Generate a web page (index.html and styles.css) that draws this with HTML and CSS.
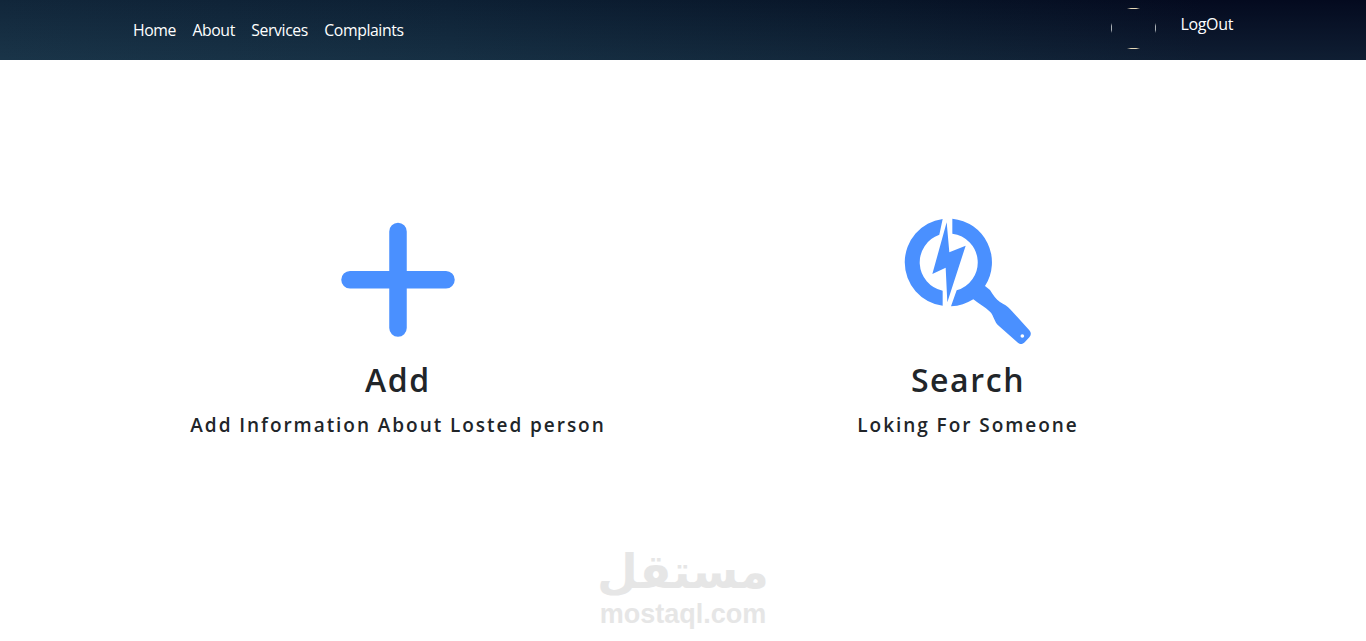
FILE: index.html
```html
<!DOCTYPE html>
<html lang="en">
<head>
<meta charset="utf-8">
<title>Services</title>
<link rel="stylesheet" href="styles.css">
</head>
<body>
<header class="topbar">
  <div class="topbar-inner">
    <nav class="nav">
      <a href="#">Home</a>
      <a href="#">About</a>
      <a href="#">Services</a>
      <a href="#">Complaints</a>
    </nav>
    <div class="account">
      <span class="avatar"><i class="tick t"></i><i class="tick b"></i><i class="tick l"></i><i class="tick r"></i></span>
      <a class="logout" href="#">LogOut</a>
    </div>
  </div>
</header>
<main class="choices">
  <section class="choice">
    <svg class="icon" width="160" height="150" viewBox="0 0 160 150" aria-hidden="true">
      <path d="M80 26.5V123M32 74.7H128" fill="none" stroke="#4a90ff" stroke-width="17.5" stroke-linecap="round"/>
    </svg>
    <h2>Add</h2>
    <p>Add Information About Losted person</p>
  </section>
  <section class="choice">
    <svg class="icon" width="160" height="150" viewBox="-6 0 480 450" aria-hidden="true">
      <g fill="#4a90ff">
        <path d="M158 41.7 A131.5 131.5 0 0 0 158 302.3 L158 257 A87 87 0 0 1 148 89.6 Z"/>
        <path d="M187 41 A131.5 131.5 0 0 1 285 243 L300 255 C310 270 318 284 330 291 C342 298 352 303 362 314 L418 376 C424 383 424 390 418 397 L404 412 C397 419 389 419 382 412 L326 362 C312 350 312 332 300 320 C285 306 265 296 250 283 C230 296 208 303 183 304 L200 256 A87 87 0 0 0 187 86 Z"/>
        <path d="M170 52 L127 207 L167 188 L172 292 L227 122 L178 142 Z"/>
      </g>
      <circle cx="397" cy="393" r="5.5" fill="#fff"/>
    </svg>
    <h2>Search</h2>
    <p>Loking For Someone</p>
  </section>
</main>
<div class="watermark" aria-hidden="true">
  <span class="wm-ar" lang="ar" dir="rtl">مستقل</span>
  <span class="wm-en">mostaql.com</span>
</div>
</body>
</html>
```
FILE: styles.css
```css
* { box-sizing: border-box; }
html, body { margin: 0; height: 641px; overflow: hidden; background: #fff; }
body { font-family: "Open Sans", "Noto Sans", sans-serif; color: #212529; position: relative; }
.topbar {
  height: 60px;
  background:
    linear-gradient(180deg, rgba(60,110,130,0) 0%, rgba(60,110,130,.2) 100%),
    linear-gradient(90deg, #11263a 0%, #0d2034 33%, #081528 65%, #040a1f 88%, #040a1f 100%);
}
.topbar-inner { width: 1140px; margin-left: 113px; height: 60px; display: flex; justify-content: space-between; padding: 0 20px; }
.nav { display: flex; gap: 16.5px; padding-top: 20px; font-size: 15.8px; line-height: 20px; letter-spacing: -.42px; }
.nav a, .logout { color: #fff; text-decoration: none; }
.account { display: flex; padding-top: 8px; }
.avatar { position: relative; width: 45px; height: 42px; display: block; }
.tick { position: absolute; display: block; background: linear-gradient(90deg, transparent, #e6d9b8 30%, #e6d9b8 70%, transparent); }
.tick.t, .tick.b { left: 16px; width: 13px; height: 1px; }
.tick.t { top: 0; }
.tick.b { bottom: 1px; }
.tick.l, .tick.r { top: 15px; width: 1px; height: 10px; background: linear-gradient(180deg, transparent, #aab0b5 30%, #aab0b5 70%, transparent); }
.tick.l { left: 0; }
.tick.r { right: 0; }
.logout { margin-left: 24px; margin-top: 6px; font-size: 16px; line-height: 20px; letter-spacing: -.35px; }
.choices { width: 1140px; margin: 145px 0 0 113px; display: grid; grid-template-columns: 570px 570px; }
.choice { display: flex; flex-direction: column; align-items: center; text-align: center; }
.icon { display: block; }
.choice h2 { margin: 5px 0 0; font-size: 32px; line-height: 40px; font-weight: 600; letter-spacing: 1.6px; }
.choice p { margin: 12px 0 0; font-size: 19px; line-height: 26px; font-weight: 600; letter-spacing: 1.95px; }
.watermark { position: absolute; left: 583px; top: 546px; width: 200px; display: flex; flex-direction: column; align-items: center; gap: 3px; color: #e6e6e6; font-weight: 700; }
.wm-ar { font-family: "DejaVu Sans", sans-serif; font-size: 47px; line-height: 52px; }
.wm-en { font-family: "Liberation Sans", sans-serif; font-size: 27px; line-height: 26px; }
```
